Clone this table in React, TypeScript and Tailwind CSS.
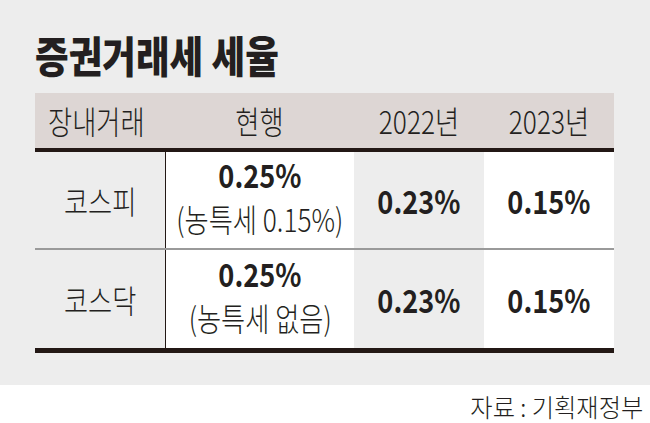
const rows = [
  { market: "코스피", now: "0.25%", note: "(농특세 0.15%)", y2022: "0.23%", y2023: "0.15%" },
  { market: "코스닥", now: "0.25%", note: "(농특세 없음)", y2022: "0.23%", y2023: "0.15%" },
];

// the reference face is narrow, so text is squeezed a little sideways
const light = "inline-block scale-x-[0.82] text-[32px] font-light whitespace-nowrap";
const bold = "inline-block scale-x-[0.85] text-[32px] font-bold whitespace-nowrap";

export default function App() {
  return (
    <div className="h-[423px] w-[650px] overflow-hidden bg-white font-['Noto_Sans_CJK_KR',sans-serif] text-[#231f20]">
      <div className="h-[385px] bg-[#ededed] pl-[35px] pr-[36px] pt-[28px]">
        <h1 className="h-[52px] text-[43px] leading-[52px] font-black">
          <span className="inline-block origin-left scale-x-[0.85] whitespace-nowrap">증권거래세 세율</span>
        </h1>
        <div className="mt-[13px] w-[579px]">
          <div className="grid h-[55px] grid-cols-[130px_189px_130px_130px] items-center bg-[#ddd6d4] leading-[55px]">
            <div className="pl-[13px]">
              <span className={light + " origin-left"}>장내거래</span>
            </div>
            <div className="text-center">
              <span className={light}>현행</span>
            </div>
            <div className="text-center">
              <span className={light}>2022년</span>
            </div>
            <div className="text-center">
              <span className={light}>2023년</span>
            </div>
          </div>
          <div className="h-[4px] bg-[#231815]" />
          {rows.map((r, i) => (
            <div
              key={r.market}
              className={
                "grid grid-cols-[130px_189px_130px_130px] " +
                (i === 0 ? "h-[98px] border-b-2 border-[#9a9a9a]" : "h-[98px]")
              }
            >
              <div className="flex items-center justify-center leading-[40px]">
                <span className={light}>{r.market}</span>
              </div>
              <div className="flex flex-col items-center justify-center border-l border-[#231815] bg-white">
                <div className="leading-[37px]">
                  <span className={bold}>{r.now}</span>
                </div>
                <div className="leading-[37px]">
                  <span className={light}>{r.note}</span>
                </div>
              </div>
              <div className="flex items-center justify-center leading-[40px]">
                <span className={bold}>{r.y2022}</span>
              </div>
              <div className="flex items-center justify-center bg-white leading-[40px]">
                <span className={bold}>{r.y2023}</span>
              </div>
            </div>
          ))}
          <div className="h-[5px] bg-[#231815]" />
        </div>
      </div>
      <div className="flex justify-end pr-[7px] pt-[6px] leading-[30px]">
        <span className="inline-block origin-right scale-x-[0.97] text-[25px] font-light whitespace-nowrap">
          자료 : 기획재정부
        </span>
      </div>
    </div>
  );
}
